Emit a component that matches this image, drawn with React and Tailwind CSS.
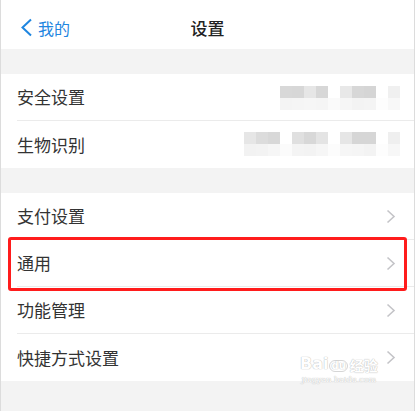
const font = { fontFamily: '"Noto Sans CJK SC", "Noto Sans", sans-serif' };

const mosaic1Top = ["#d8d8d8", "#d7d7d7", "#e6e6e6", "#d7d7d7", "#ffffff", "#e8e8e8", "#d7d7d7", "#d5d5d5", "#ffffff", "#f0f0f0"];
const mosaic1Bot = ["#f4f4f4", "#f5f5f5", "#f6f6f6", "#f5f5f5", "#fafafa", "#f6f6f6", "#f3f3f3", "#f4f4f4", "#fdfdfd", "#f8f8f8"];
const mosaic2Top = ["#e6e6e6", "#dcdcdc", "#d8d8d8", "#ffffff", "#e0e0e0", "#d8d8d8", "#e4e4e4", "#ffffff", "#e6e6e6", "#d6d6d6", "#d6d6d6", "#ffffff", "#efefef"];
const mosaic2Bot = ["#f2f2f2", "#f3f3f3", "#f6f6f6", "#fbfbfb", "#f4f4f4", "#f3f3f3", "#f6f6f6", "#fcfcfc", "#f6f6f6", "#f5f5f5", "#f3f3f3", "#fdfdfd", "#f7f7f7"];

function Mosaic({ top, bot }) {
  return (
    <div className="flex flex-col">
      <div className="flex">
        {top.map((c, i) => (
          <div key={i} className="h-[12px] w-[12px]" style={{ background: c }} />
        ))}
      </div>
      <div className="flex">
        {bot.map((c, i) => (
          <div key={i} className="h-[12px] w-[12px]" style={{ background: c }} />
        ))}
      </div>
    </div>
  );
}

function Chevron() {
  return (
    <svg width="10" height="15" viewBox="0 0 10 15" className="block">
      <polyline points="1.5,1.5 8,7.5 1.5,13.5" fill="none" stroke="#c4c4c8" strokeWidth="1.6" />
    </svg>
  );
}

function Row({ label, last }) {
  return (
    <div className="bg-white pl-4">
      <div
        className={
          "flex h-[47px] items-center justify-between pr-[18px] " +
          (last ? "" : "border-b border-[#ebebeb]")
        }
      >
        <span className="text-[17px] text-[#333333]">{label}</span>
        <Chevron />
      </div>
    </div>
  );
}

export default function App() {
  return (
    <div className="h-[411px] w-[417px] bg-white" style={font}>
      <div className="relative h-[411px] w-[415px] overflow-hidden border-l border-r border-[#dcdcdc] bg-[#f3f3f3]">
        <div className="relative flex h-[49px] items-center justify-center bg-white">
          <div className="absolute left-[19px] top-[18px] flex items-center gap-[5px]">
            <svg width="13" height="19" viewBox="0 0 13 19">
              <polyline points="11,1.5 2.5,9.5 11,17.5" fill="none" stroke="#1f86e0" strokeWidth="2" />
            </svg>
            <span className="text-[16px] leading-none text-[#1f86e0]">我的</span>
          </div>
          <span className="pt-[6px] text-[17px] font-medium text-[#222222]">设置</span>
        </div>

        <div className="h-[25px]" />

        <div className="bg-white pl-4">
          <div className="flex h-[47px] items-center justify-between border-b border-[#ebebeb]">
            <span className="text-[17px] text-[#333333]">安全设置</span>
            <div className="mr-[14px] mt-[1px]">
              <Mosaic top={mosaic1Top} bot={mosaic1Bot} />
            </div>
          </div>
        </div>
        <div className="bg-white pl-4">
          <div className="flex h-[47px] items-center justify-between">
            <span className="text-[17px] text-[#333333]">生物识别</span>
            <div className="mr-[14px] mt-[-2px]">
              <Mosaic top={mosaic2Top} bot={mosaic2Bot} />
            </div>
          </div>
        </div>

        <div className="h-[25px]" />

        <Row label="支付设置" />
        <div className="relative">
          <Row label="通用" />
          <div className="absolute bottom-[-4px] left-[7px] right-[7px] top-[-3px] rounded-[3px] border-[3px] border-[#ff1c1c]" />
        </div>
        <Row label="功能管理" />
        <Row label="快捷方式设置" last />

        <div className="h-[25px]" />

        <div className="absolute left-[299px] top-[356px] flex flex-col items-center leading-none text-white [text-shadow:0_0_1px_#bdbdbd,0_0_1px_#bdbdbd]">
          <div className="flex items-end gap-[1px] text-[16px] font-bold" style={{ fontFamily: '"DejaVu Sans", sans-serif' }}>
            <span>Bai</span>
            <span className="rounded-full border border-[#d6d6d6] px-[1px] text-[10px]">du</span>
            <span className="ml-[1px] text-[14px]" style={font}>经验</span>
          </div>
          <span className="mt-[4px] text-[8px]" style={{ fontFamily: '"DejaVu Serif", serif' }}>jingyan.baidu.com</span>
        </div>
      </div>
    </div>
  );
}
